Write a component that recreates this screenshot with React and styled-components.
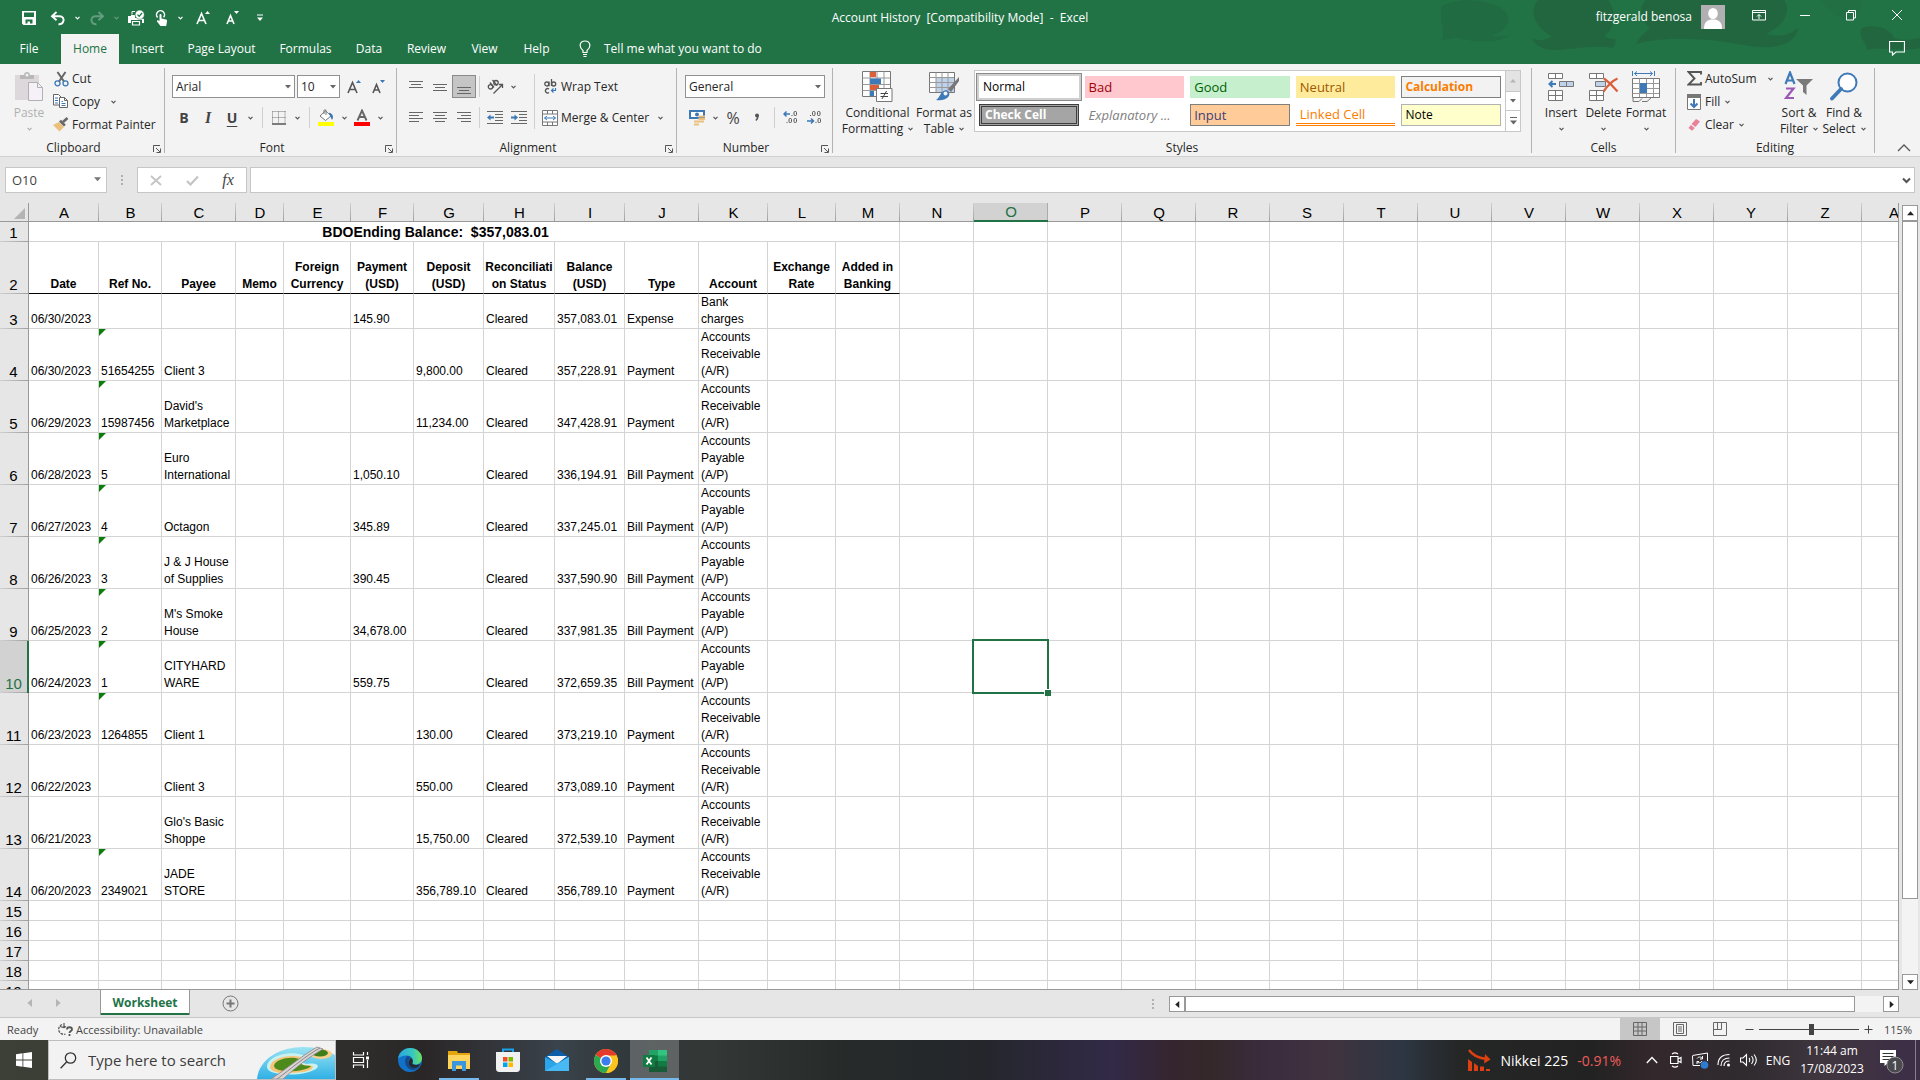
import React from "react";
import styled, { createGlobalStyle, css } from "styled-components";

const ui = `"Open Sans", "Noto Sans", sans-serif`;
const sheetFont = `"Liberation Sans", Arial, sans-serif`;
const green = "#217346";

const GlobalStyle = createGlobalStyle`
  * { box-sizing: border-box; }
  body { margin: 0; overflow: hidden; font-family: ${ui}; font-size: 12px; color: #262626; }
  button, input, select { font: inherit; color: inherit; margin: 0; padding: 0; border: 0; background: none; border-radius: 0; outline: none; }
  svg { display: block; flex: none; }
`;

const Window = styled.div`
  height: 100vh;
  display: flex;
  flex-direction: column;
  background: #e6e6e6;
`;

/* ---------- title bar and tabs ---------- */
const Header = styled.header`
  position: relative;
  background: ${green};
  color: #fff;
  flex: none;
`;
const HeaderArt = styled.svg`
  position: absolute;
  right: 0;
  top: 0;
`;
const TitleRow = styled.div`
  position: relative;
  height: 34px;
  display: grid;
  grid-template-columns: 1fr auto 1fr;
`;
const QuickAccess = styled.div`
  display: flex;
  align-items: center;
  padding-left: 17px;
`;
const QuickButton = styled.button`
  width: ${(p) => p.$w || 24}px;
  height: 30px;
  display: flex;
  align-items: center;
  justify-content: center;
  opacity: ${(p) => (p.$dim ? 0.3 : 1)};
`;
const Title = styled.h1`
  margin: 0;
  font-size: 12px;
  font-weight: 400;
  line-height: 36px;
  white-space: pre;
`;
const WindowTools = styled.div`
  display: flex;
  justify-content: flex-end;
`;
const User = styled.button`
  display: flex;
  align-items: center;
  gap: 9px;
  height: 34px;
  line-height: 36px;
  margin-right: 11px;
`;
const WindowButton = styled.button`
  width: ${(p) => p.$w || 46}px;
  height: 30px;
  display: flex;
  align-items: center;
  justify-content: center;
`;
const TabRow = styled.nav`
  position: relative;
  height: 30px;
  display: flex;
`;
const Tab = styled.button`
  width: ${(p) => p.$w}px;
  height: 30px;
  padding-bottom: 2px;
  text-align: center;
  ${(p) => p.$active && css`
    background: #f3f3f3;
    color: ${green};
    margin-left: 3px;
  `}
`;
const TellMe = styled.button`
  display: flex;
  align-items: center;
  gap: 13px;
  padding: 0 0 2px 16px;
`;
const CommentButton = styled.button`
  margin-left: auto;
  padding: 0 15px 2px 0;
`;

/* ---------- ribbon ---------- */
const Ribbon = styled.div`
  height: 93px;
  flex: none;
  display: flex;
  background: #f3f3f3;
  border-bottom: 1px solid #d2d0ce;
`;
const GroupBox = styled.section`
  display: flex;
  ${(p) => (p.$w ? css`width: ${p.$w}px; flex: none;` : css`flex: 1; min-width: 0;`)}
  &::after {
    content: "";
    width: 1px;
    margin: 4px 0 3px;
    background: #b3b3b3;
  }
`;
const GroupInner = styled.div`
  flex: 1;
  min-width: 0;
  display: flex;
  flex-direction: column;
`;
const GroupBody = styled.div`
  height: 76px;
  display: flex;
  padding: 3px 0 0 ${(p) => p.$pad || 0}px;
  justify-content: ${(p) => p.$justify || "flex-start"};
`;
const GroupFoot = styled.div`
  height: 16px;
  display: flex;
  align-items: center;
  line-height: 16px;
  text-align: center;
`;
const Launcher = styled.button`
  width: 10px;
  height: 10px;
  margin: 2px 2px 0 5px;
`;
const FootLabel = styled.span`
  flex: 1;
`;
const BigButton = styled.button`
  width: ${(p) => p.$w}px;
  height: 71px;
  display: flex;
  flex-direction: column;
  align-items: center;
  line-height: 16px;
  white-space: nowrap;
  color: ${(p) => (p.$disabled ? "#b1b1b1" : "#262626")};
`;
const BigIcon = styled.span`
  height: 38px;
  display: flex;
  align-items: center;
`;
const Line = styled.span`
  height: 16px;
  display: flex;
  align-items: center;
  gap: 5px;
`;
const CommandList = styled.div`
  display: flex;
  flex-direction: column;
  width: ${(p) => p.$w}px;
  padding-left: ${(p) => p.$pad || 0}px;
`;
const Command = styled.button`
  height: 23px;
  display: flex;
  align-items: center;
  gap: 3px;
  white-space: nowrap;
`;
const IconSlot = styled.span`
  width: 16px;
  display: flex;
  justify-content: center;
`;
const ChevSlot = styled.span`
  margin-left: ${(p) => p.$gap || 2}px;
`;
const Rows = styled.div`
  display: flex;
  flex-direction: column;
  gap: 8px;
  padding-top: 8px;
`;
const ToolRow = styled.div`
  height: 23px;
  display: flex;
  align-items: center;
`;
const Tool = styled.button`
  width: 24px;
  height: 23px;
  display: flex;
  align-items: center;
  justify-content: center;
  color: #444;
  font-size: ${(p) => p.$size || 14}px;
  font-weight: ${(p) => (p.$bold ? 700 : 400)};
  font-style: ${(p) => (p.$italic ? "italic" : "normal")};
  font-family: ${(p) => (p.$italic ? `"Liberation Serif", serif` : "inherit")};
  text-decoration: ${(p) => (p.$underline ? "underline" : "none")};
  text-underline-offset: 3px;
  ${(p) => p.$pressed && css`
    background: #c5c5c5;
    box-shadow: inset 0 0 0 1px #8a8a8a;
  `}
`;
const SmallArrow = styled.button`
  width: 12px;
  height: 23px;
  display: flex;
  align-items: center;
  justify-content: center;
`;
const Divider = styled.span`
  width: 1px;
  height: ${(p) => p.$h || 21}px;
  background: #d0d0d0;
  margin: ${(p) => p.$m || "0 4px 0 6px"};
`;
const SelectWrap = styled.span`
  position: relative;
  display: block;
  width: ${(p) => p.$w}px;
  height: 23px;
  margin-right: 2px;
  svg { position: absolute; right: 4px; top: 9px; pointer-events: none; }
`;
const Combo = styled.select`
  appearance: none;
  width: 100%;
  height: 23px;
  padding-left: 3px;
  background: #fff;
  border: 1px solid #919191;
`;

/* style gallery */
const Gallery = styled.div`
  flex: 1;
  height: 62px;
  margin: 3px 10px 0 0;
  display: flex;
  background: #fff;
  border: 1px solid #c8c8c8;
`;
const Swatches = styled.div`
  flex: 1;
  display: grid;
  grid-template-columns: repeat(5, minmax(0, 1fr));
  grid-auto-rows: 22px;
  gap: 6px;
  padding: 5px 4px;
`;
const Swatch = styled.button`
  padding-left: ${(p) => (p.$border ? 3 : 4)}px;
  text-align: left;
  white-space: nowrap;
  font-size: ${(p) => p.$size || 13}px;
  line-height: 16px;
  color: ${(p) => p.$color || "#000"};
  background: ${(p) => p.$bg || "#fff"};
  border: ${(p) => p.$border || "0"};
  border-bottom: ${(p) => p.$under || p.$border || "0"};
  font-weight: ${(p) => (p.$bold ? 700 : 400)};
  font-style: ${(p) => (p.$italic ? "italic" : "normal")};
  ${(p) => p.$selected && css`box-shadow: 0 0 0 2px #cfcfcf, 0 0 0 3px #8a8a8a;`}
`;
const GalleryScroll = styled.div`
  width: 15px;
  display: grid;
  grid-template-rows: 20px 19px 21px;
  border-left: 1px solid #c8c8c8;
`;
const GalleryButton = styled.button`
  display: flex;
  align-items: center;
  justify-content: center;
  background: ${(p) => (p.$off ? "#e3e3e3" : "#fff")};
  & + & { border-top: 1px solid #c8c8c8; }
`;
const Collapse = styled.button`
  width: 45px;
  display: flex;
  align-items: flex-end;
  justify-content: flex-end;
  padding: 0 9px 4px 0;
`;

/* ---------- formula bar ---------- */
const FormulaBar = styled.div`
  height: 46px;
  flex: none;
  display: flex;
  align-items: center;
  padding: 0 5px 0 5px;
`;
const NameBox = styled.span`
  position: relative;
  width: 102px;
  svg { position: absolute; right: 6px; top: 9px; }
`;
const NameInput = styled.input`
  width: 100%;
  height: 26px;
  padding-left: 6px;
  background: #fff;
  border: 1px solid #c6c6c6;
  color: #444;
  font-size: 13px;
  display: block;
`;
const Grip = styled.span`
  width: 2px;
  height: 10px;
  margin: 0 ${(p) => p.$m ?? 14}px;
  background: repeating-linear-gradient(#b0b0b0 0 2px, transparent 2px 4px);
`;
const FormulaTools = styled.div`
  width: 110px;
  height: 26px;
  display: flex;
  justify-content: space-around;
  background: #fff;
  border: 1px solid #c6c6c6;
  margin-right: 3px;
`;
const FormulaButton = styled.button`
  width: 30px;
  display: flex;
  align-items: center;
  justify-content: center;
  font: italic 400 16px "Liberation Serif", serif;
  color: #444;
`;
const FormulaField = styled.span`
  flex: 1;
  height: 26px;
  display: flex;
  align-items: center;
  padding-right: 3px;
  background: #fff;
  border: 1px solid #c6c6c6;
`;
const FormulaInput = styled.input`
  flex: 1;
  height: 24px;
`;

/* ---------- sheet ---------- */
const SheetArea = styled.main`
  flex: 1;
  min-height: 0;
  display: flex;
`;
const GridView = styled.div`
  flex: 1;
  min-width: 0;
  overflow: hidden;
  background: #fff;
  border-right: 1px solid #999;
  border-bottom: 1px solid #999;
`;
const Grid = styled.table`
  table-layout: fixed;
  width: 0;
  border-collapse: separate;
  border-spacing: 0;
  font-family: ${sheetFont};
  font-size: 12px;
  line-height: 17px;
  color: #000;
`;
const ColHead = styled.th`
  height: 19px;
  padding: 1px 0 0;
  font-size: 15px;
  font-weight: 400;
  line-height: 17px;
  background: linear-gradient(#d0d0d0, #a0a0a0) right / 1px 100% no-repeat, #e6e6e6;
  border-bottom: 1px solid #999;
  ${(p) => p.$active && css`
    color: ${green};
    background: linear-gradient(#ababab, #ababab) right / 1px 100% no-repeat, #d2d2d2;
    border-bottom: 2px solid ${green};
    padding: 0;
  `}
`;
const Corner = styled(ColHead)`
  background: #e6e6e6;
  border-right: 1px solid #999;
  padding: 3px 3px 0 14px;
`;
const RowHead = styled.th`
  padding: 0 1px 0 0;
  overflow: hidden;
  vertical-align: bottom;
  font-size: 15px;
  font-weight: 400;
  background: linear-gradient(90deg, #d0d0d0, #a0a0a0) bottom / 100% 1px no-repeat, #e6e6e6;
  border-right: 1px solid #999;
  line-height: 19px;
  ${(p) => p.$active && css`
    color: ${green};
    background-color: #d2d2d2;
    border-right: 2px solid ${green};
    padding: 0;
  `}
`;
const Row = styled.tr`
  height: ${(p) => p.$h}px;
`;
const Cell = styled.td`
  position: relative;
  padding: 0 0 0 2px;
  vertical-align: bottom;
  border-right: 1px solid #d4d4d4;
  border-bottom: 1px solid #d4d4d4;
  white-space: pre-line;
`;
const HeadCell = styled(Cell)`
  padding: 0;
  text-align: center;
  font-weight: 700;
  border-bottom-color: #000;
`;
const TitleCell = styled(Cell)`
  padding: 0 57px 0 0;
  text-align: center;
  font-size: 14px;
  font-weight: 700;
  white-space: pre;
`;
const ErrorMark = styled.i`
  position: absolute;
  left: 0;
  top: 0;
  border-top: 7px solid #0a7d0a;
  border-right: 7px solid transparent;
`;
const Selection = styled.div`
  position: absolute;
  inset: -2px;
  border: 2px solid ${green};
  z-index: 1;
  &::after {
    content: "";
    position: absolute;
    right: -4px;
    bottom: -4px;
    width: 6px;
    height: 6px;
    background: ${green};
    border: solid #fff;
    border-width: 1px 0 0 1px;
  }
`;
const VScroll = styled.div`
  width: 21px;
  display: flex;
  flex-direction: column;
  padding: 2px 3px 0 3px;
`;
const ScrollButton = styled.button`
  width: 16px;
  height: 16px;
  flex: none;
  display: flex;
  align-items: center;
  justify-content: center;
  background: #fff;
  border: 1px solid #999;
`;
const VTrack = styled.div`
  flex: 1;
  width: 16px;
  background: #f3f3f3;
  display: flex;
  flex-direction: column;
`;
const VThumb = styled.div`
  height: 90%;
  background: #fff;
  border: 1px solid #999;
`;

const SheetTabs = styled.div`
  height: 28px;
  flex: none;
  display: flex;
  align-items: flex-start;
  border-bottom: 1px solid #c6c6c6;
`;
const TabNav = styled.div`
  width: 100px;
  height: 26px;
  display: flex;
  align-items: center;
  gap: 20px;
  padding-left: 26px;
`;
const SheetTab = styled.button`
  width: 90px;
  height: 25px;
  background: #fff;
  color: ${green};
  font-weight: 700;
  border: solid #999;
  border-width: 0 1px;
  box-shadow: inset 0 -2px ${green};
`;
const AddSheet = styled.button`
  margin: 5px 0 0 32px;
`;
const HScroll = styled.div`
  margin-left: auto;
  height: 28px;
  width: 40%;
  display: flex;
  align-items: center;
  padding-right: 21px;
`;
const HGap = styled.span`
  width: 15px;
`;
const HTrack = styled.div`
  flex: 1;
  height: 16px;
  background: #f3f3f3;
`;
const HThumb = styled.div`
  width: 96%;
  height: 16px;
  background: #fff;
  border: 1px solid #999;
`;

/* ---------- status bar ---------- */
const Status = styled.footer`
  height: 22px;
  flex: none;
  display: flex;
  align-items: center;
  background: #f3f3f3;
  color: #444;
  font-size: 11px;
`;
const StatusText = styled.span`
  padding-left: 7px;
  width: 57px;
`;
const Access = styled.button`
  display: flex;
  align-items: center;
  gap: 3px;
`;
const Views = styled.div`
  margin-left: auto;
  display: flex;
`;
const ViewButton = styled.button`
  width: 40px;
  height: 22px;
  display: flex;
  align-items: center;
  justify-content: center;
  background: ${(p) => (p.$active ? "#c6c6c6" : "transparent")};
`;
const ZoomGroup = styled.div`
  display: flex;
  align-items: center;
  gap: 5px;
  padding: 0 8px 0 5px;
`;
const ZoomRange = styled.input`
  appearance: none;
  width: 100px;
  height: 12px;
  background: linear-gradient(#444, #444) center / 100% 1px no-repeat;
  &::-webkit-slider-thumb {
    appearance: none;
    width: 5px;
    height: 11px;
    background: #444;
  }
`;
const ZoomValue = styled.button`
  width: 34px;
  text-align: right;
`;

/* ---------- taskbar ---------- */
const Taskbar = styled.div`
  height: 40px;
  flex: none;
  display: flex;
  color: #fff;
  background: linear-gradient(90deg, #3d4037 0%, #33352f 12%, #2f2e2d 18%, #2a2627 22%, #3a424b 29%, #30383a 33%,
    #333735 37%, #262b2a 44%, #24262b 51%, #322a47 58%, #35252f 61%, #34282a 63%, #3b2c3e 66%, #40333f 69%, #2d3642 73%,
    #252626 76%, #232222 83%, #33282c 86%, #2f2b2f 91%, #40363f 95%, #3d2f45 99%);
`;
const Start = styled.button`
  width: 48px;
  display: flex;
  align-items: center;
  justify-content: center;
`;
const Search = styled.label`
  width: 288px;
  display: flex;
  align-items: center;
  padding-left: 11px;
  background: #f2f2f2;
  border: 1px solid #bdbdbd;
`;
const SearchInput = styled.input`
  width: 170px;
  flex: 1;
  padding-left: 11px;
  font-size: 15px;
  color: #333;
  &::placeholder { color: #3d3d3d; opacity: 1; }
`;
const SearchArtWrap = styled.span`
  align-self: flex-end;
`;
const Apps = styled.div`
  display: flex;
`;
const AppButton = styled.button`
  width: 49px;
  display: flex;
  align-items: center;
  justify-content: center;
  border-bottom: 2px solid transparent;
  border-top: 2px solid transparent;
  ${(p) => p.$running && css`
    background: linear-gradient(#76b9ed, #76b9ed) bottom / ${p.$active ? "100%" : "40px"} 2px no-repeat ${p.$active ? ", rgba(255,255,255,.22)" : ""};
    border-bottom: 0;
  `}
`;
const Ticker = styled.button`
  margin-left: auto;
  display: flex;
  align-items: center;
  gap: 9px;
  font-size: 14px;
  white-space: nowrap;
  margin-right: 19px;
`;
const Loss = styled.span`
  color: #ee5d5d;
`;
const Tray = styled.div`
  display: flex;
`;
const TrayButton = styled.button`
  width: 24px;
  display: flex;
  align-items: center;
  justify-content: center;
`;
const Language = styled.button`
  width: 36px;
`;
const Clock = styled.button`
  width: 72px;
  line-height: 18px;
  text-align: center;
`;
const Notify = styled.button`
  width: 47px;
  display: flex;
  align-items: center;
  justify-content: center;
  padding-top: 3px;
`;
const DesktopEdge = styled.button`
  width: 5px;
  border-left: 1px solid #8a8090;
`;

/* ---------- icons ---------- */
const Chevron = ({ color = "#555", big }) => (
  <svg width={big ? 9 : 5} height={big ? 7 : 4} viewBox="0 0 5 4"><path d="M.5 .8 2.5 2.8 4.5 .8" fill="none" stroke={color} strokeWidth="1.2" /></svg>
);
const Triangle = ({ dir = "down", color = "#444", s = 6 }) => {
  const d = { down: "M0 1H6L3 4.5Z", up: "M0 4.5H6L3 1Z", left: "M4.5 0V6L1 3Z", right: "M1.5 0V6L5 3Z" }[dir];
  return <svg width={s} height={s} viewBox="0 0 6 6"><path d={d} fill={color} /></svg>;
};
const LauncherIcon = () => (
  <svg width="10" height="10" viewBox="0 0 10 10"><path d="M1.5 8V1.5H8M4 4 8 8M8.5 4.5V8.5H4.5" fill="none" stroke="#555" /></svg>
);
const FontSizeIcon = ({ up, color = "#555", mark = "#3b78b5", small }) => (
  <svg width="15" height="16" viewBox="0 0 15 16">
    <path d={small ? "M2 14 5.5 5.5 9 14M3.2 11H7.8" : "M1 14 5.5 3.5 10 14M2.6 10.5H8.4"} fill="none" stroke={color} strokeWidth="1.6" />
    <path d={up ? "M9 4H14L11.5 1Z" : "M9 1H14L11.5 4Z"} fill={mark} />
  </svg>
);
const UndoIcon = ({ flip }) => (
  <svg width="16" height="15" viewBox="0 0 16 15"><g transform={flip ? "matrix(-1 0 0 1 16 0)" : undefined}>
    <path d="M6.5 1 2 5.2 6.5 9.2M2.5 5.2H9.5C13 5.2 14.3 8 13.2 10.6 12.5 12.3 10.7 13.4 8.5 13.2" fill="none" stroke="#fff" strokeWidth="1.9" /></g></svg>
);
const SaveIcon = () => (
  <svg width="14" height="14" viewBox="0 0 14 14"><path fillRule="evenodd" d="M0 0H14V14H1.5L0 12.5ZM2 1.5V6H12V1.5ZM3.5 8.5V12.5H5.5V10.5H8V12.5H10.5V8.5Z" fill="#fff" /></svg>
);
const PrintIcon = () => (
  <svg width="17" height="16" viewBox="0 0 17 16">
    <path d="M0 6H3V5H7V8H13L16 9V13H14V10H3V13H0Z" fill="#fff" /><path d="M4.5 11.5H11.5V15H4.5Z" fill={green} stroke="#fff" strokeWidth="1.2" />
    <path d="M4 4.500V1.500H7" fill="none" stroke="#fff" /><circle cx="11.700" cy="4.700" r="4.600" fill="#fff" stroke={green} strokeWidth=".6" /><path d="M9.500 4.600 11.200 6.300 14 3" fill="none" stroke={green} strokeWidth="1.300" />
  </svg>
);
const TouchIcon = () => (
  <svg width="13" height="17" viewBox="0 0 13 17">
    <path d="M4.500 11V5C4.500 3.600 6.500 3.600 6.500 5V8.500L11 9.500C12 9.800 12.200 10.500 12 11.500L11.200 16H5.500L2 11.500C1.500 10.500 3 10 3.500 10.500Z" fill="#fff" />
    <path d="M2.600 7.500A4 4 0 1 1 8.600 7.300" fill="none" stroke="#fff" strokeWidth="1.500" />
  </svg>
);
const LinesIcon = ({ rows }) => (
  <svg width="14" height="14" viewBox="0 0 14 14">
    {rows.map(([x, y, l]) => <path key={y} d={`M${x} ${y}.5H${x + l}`} stroke="#666" />)}
  </svg>
);
const IndentIcon = ({ out }) => (
  <svg width="16" height="14" viewBox="0 0 16 14">
    <path d="M0 .5H16M8 3.500H16M8 6.500H16M8 9.500H16M0 12.500H16" stroke="#666" />
    {out ? <path d="M0 6.500 3.500 3.500V5.500H7V7.500H3.500V9.500Z" fill="#3b78b5" /> : <path d="M7 6.500 3.500 3.500V5.500H0V7.500H3.500V9.500Z" fill="#3b78b5" />}
  </svg>
);
const OrientIcon = () => (
  <svg width="17" height="16" viewBox="0 0 17 16">
    <g fill="none" stroke="#555" strokeWidth="1.300"><circle cx="3.500" cy="7.800" r="2.200" /><path d="M3 3.500 7 8.500" /><path d="M5.500 1 10 6.500" /><circle cx="9" cy="3.700" r="2.200" /><path d="M6.500 14.500 15.500 5.500M12 5.500H15.500V9" /></g>
  </svg>
);
const WrapIcon = () => (
  <svg width="13" height="15" viewBox="0 0 13 15">
    <g fill="none" stroke="#555" strokeWidth="1.300"><circle cx="2.800" cy="5" r="2" /><path d="M5 2.500V7.200M7.500 0V7" /><circle cx="9.700" cy="5" r="2" /><path d="M5 10A2.200 2.200 0 1 0 5 13.500" /></g>
    <path d="M11.500 9V11.500H8M9.500 9.500 7.500 11.500 9.500 13.500" fill="none" stroke="#3b78b5" strokeWidth="1.200" />
  </svg>
);
const MergeIcon = () => (
  <svg width="16" height="16" viewBox="0 0 16 16"><path d="M.5 .5H15.500V15.500H.5ZM.5 4H15.500M.5 12H15.500M5.500 .5V4M10.500 .5V4M5.500 12V15.500M10.500 12V15.500" fill="#fff" stroke="#777" /><path d="M2.500 8H13.500M5 6 2.500 8 5 10M11 6 13.500 8 11 10" fill="none" stroke="#3b78b5" /></svg>
);
const CutIcon = () => (
  <svg width="15" height="16" viewBox="0 0 15 16"><path d="M3.500 1 10 10.500M11.500 1 5 10.500" stroke="#666" strokeWidth="2" /><g fill="none" stroke="#3b78b5" strokeWidth="1.300"><circle cx="3.500" cy="12.300" r="2.500" /><circle cx="11.500" cy="12.300" r="2.500" /></g></svg>
);
const CopyIcon = () => (
  <svg width="16" height="15" viewBox="0 0 16 15">
    <path d="M.5 .5H5.500L8.500 3.500V11H.5Z" fill="#fff" stroke="#666" /><path d="M2 4H5M2 6.500H5M2 9H5" stroke="#3b78b5" />
    <path d="M6.500 3.500H11.500L14.500 6.500V13.500H6.500Z" fill="#fff" stroke="#666" /><path d="M11.500 3.500V6.500H14.500" fill="none" stroke="#666" /><path d="M8.500 7.500H10M8.500 9.500H12.500M8.500 11.500H12.500" stroke="#3b78b5" />
  </svg>
);
const PainterIcon = () => (
  <svg width="16" height="15" viewBox="0 0 16 15"><path d="M0 8 6 5 11 10 6.500 14.500Z" fill="#ebc07c" /><path d="M6 4.500 8 2.800 12.800 7.800 11 9.500Z" fill="#666" /><path d="M10 5 14.500 1" stroke="#666" strokeWidth="2.600" /></svg>
);
const PasteIcon = () => (
  <svg width="30" height="31" viewBox="0 0 30 31"><path d="M1 4H25V29H1Z" fill="#dcd8dc" /><path d="M6 8V4H10C10 0 16 0 16 4H20V8Z" fill="#b8b8b8" /><circle cx="13" cy="4" r="1.500" fill="#f3f3f3" /><path d="M14.500 11.500H23.500L28.500 16.500V29.500H14.500Z" fill="#f6f1f8" stroke="#b1b1b1" /><path d="M23.500 11.500V16.500H28.500" fill="none" stroke="#b1b1b1" /></svg>
);
const BordersIcon = () => (
  <svg width="14" height="14" viewBox="0 0 14 14"><path d="M.5 .5H13.500M.5 6.500H13.500M.5 .5V12M6.500 .5V12M13 .5V12" stroke="#777" strokeDasharray="1 1" fill="none" /><path d="M0 13H14" stroke="#555" strokeWidth="1.500" /></svg>
);
const FillColorIcon = () => (
  <svg width="16" height="17" viewBox="0 0 16 17"><path d="M2 7 7.500 1.800 13 7 7.500 11.500Z" fill="#fff" stroke="#777" /><path d="M6 5V1.500C6 .5 8 .5 8 1.500V6" fill="none" stroke="#777" /><path d="M11.500 3.500C15 5 16 8 14 11 13 9 12.500 7 11 5Z" fill="#3b78b5" /><path d="M0 13H16V17H0Z" fill="#ff0" /></svg>
);
const FontColorIcon = () => (
  <svg width="16" height="17" viewBox="0 0 16 17"><path d="M3.500 11.500 8 1.500 12.500 11.500M5 8H11" fill="none" stroke="#666" strokeWidth="1.900" /><path d="M0 13H16V17H0Z" fill="red" /></svg>
);
const CurrencyIcon = () => (
  <svg width="17" height="17" viewBox="0 0 17 17"><path d="M0 1H16V10H0Z" fill="#3b78b5" /><path d="M2 3H14V8H2Z" fill="#fff" /><circle cx="8" cy="5.500" r="2" fill="#3b78b5" /><path d="M9.500 7.500H16M9.500 10H16M5 12.500H11M5 15.500H10M10 12.500H15" stroke="#ebc07c" strokeWidth="2" /></svg>
);
const CommaIcon = () => (
  <svg width="6" height="9" viewBox="0 0 6 9"><path d="M3 3C3 6 2 7 .8 8" fill="none" stroke="#555" strokeWidth="1.500" transform="translate(1 -.5)" /><circle cx="3" cy="2.500" r="2" fill="#555" /></svg>
);
const DecimalIcon = ({ less }) => (
  <svg width="15" height="15" viewBox="0 0 15 15" fill="none">
    <g stroke="#555">{less
      ? <><rect x="5.500" y="1.500" width="2.500" height="4" rx="1" /><rect x="10.500" y="1.500" width="2.500" height="4" rx="1" /><rect x="11" y="8.500" width="2.500" height="4" rx="1" /><path d="M3 5.500H4M8.500 12.500H9.500" /></>
      : <><rect x="11" y="1.500" width="2.500" height="4" rx="1" /><rect x="6" y="8.500" width="2.500" height="4" rx="1" /><rect x="11" y="8.500" width="2.500" height="4" rx="1" /><path d="M8.500 5.500H9.500M3.500 12.500H4.500" /></>}</g>
    {less ? <path d="M0 11H6M4 8.500 6.500 11 4 13.500" stroke="#3b78b5" strokeWidth="1.500" /> : <path d="M7 4H1M3.500 1.500 1 4 3.500 6.500" stroke="#3b78b5" strokeWidth="1.500" />}
  </svg>
);
const CondIcon = () => (
  <svg width="31" height="31" viewBox="0 0 31 31">
    <path d="M.5 .5H28.500V25.500H.5Z" fill="#fff" stroke="#777" /><path d="M8 .5V25M15 .5V25M22 .5V25M.5 7H28M.5 13.500H28M.5 19.500H28" stroke="#999" />
    <path d="M8 1H14V6H8ZM8 14H17V19H8Z" fill="#dc5f3c" /><path d="M8 7.500H19V13H8ZM8 20H12V25H8Z" fill="#3f7ab8" />
    <path d="M14.500 17.500H30V30.500H14.500Z" fill="#fff" stroke="#777" /><path d="M18.500 22.500H26M18.500 25.500H26M24.500 20 20 28" stroke="#444" />
  </svg>
);
const TableIcon = () => (
  <svg width="31" height="30" viewBox="0 0 31 30"><path d="M.5 1.500H25.500V21.500H.5Z" fill="#fff" stroke="#777" /><path d="M7 7H25V21H7Z" fill="#bfd2ea" /><path d="M7 1.500V21M13 1.500V21M19 1.500V21M.5 6.500H25M.5 11.500H25M.5 16.500H25" stroke="#999" /><path d="M30 6 19 18 22 21 30 10Z" fill="#777" /><path d="M7 29C11 27 11 20 17 19 20 20 21 22 20 25 17 29 12 30 7 29Z" fill="#3f7ab8" /><circle cx="16.500" cy="22.500" r="2" fill="#f3f3f3" /></svg>
);
const InsertIcon = () => (
  <svg width="27" height="29" viewBox="0 0 27 29"><path d="M.5 1.500H14.500V6.500H.5ZM7.500 1.500V6.500M.5 18.500H14.500V28.500H.5ZM7.500 18.500V28.500M.5 23.500H14.500" fill="#fff" stroke="#777" /><path d="M11.500 9.500H25.500V14.500H11.500ZM18.500 9.500V14.500" fill="#bfd2ea" stroke="#777" /><path d="M1.500 12H8M4.500 9 1.500 12 4.500 15" fill="none" stroke="#3f7ab8" strokeWidth="2" /></svg>
);
const DeleteIcon = () => (
  <svg width="30" height="29" viewBox="0 0 30 29"><path d="M.5 1.500H14.500V6.500H.5ZM7.500 1.500V6.500M.5 18.500H14.500V28.500H.5ZM7.500 18.500V28.500M.5 23.500H14.500" fill="#fff" stroke="#777" /><path d="M6.500 9.500H16.500V14.500H6.500Z" fill="#bfd2ea" stroke="#777" /><path d="M15 6.500C20 10 24 14 28.500 19.500M28.500 6.500C23 9 19 13 14.500 19.500" stroke="#dc5f3c" strokeWidth="2.200" fill="none" /></svg>
);
const FormatIcon = () => (
  <svg width="28" height="31" viewBox="0 0 28 31"><path d="M.5 0V5M22.500 0V5M2.500 2.500H20.500M5 .5 2.500 2.500 5 5M18 .5 20.500 2.500 18 5" fill="none" stroke="#3f7ab8" /><path d="M.5 7.500H27.500V26.500H.5Z" fill="#fff" stroke="#777" /><path d="M7.500 7.500V26M14.500 7.500V26M21.500 7.500V26M.5 12.500H27M.5 17.500H27M.5 22.500H27" stroke="#999" /><path d="M8 12H15V22H8Z" fill="#3f7ab8" /><path d="M1 27V30.500H7L10 27.500M10 30.500H15L19 27" fill="none" stroke="#777" /></svg>
);
const SortIcon = () => (
  <svg width="30" height="30" viewBox="0 0 30 30" fill="none"><path d="M1.500 13 6 1.500 10.500 13M3 9.500H9" stroke="#3f7ab8" strokeWidth="2.200" /><path d="M2 17.500H9.500L2 27H10" stroke="#9b59b6" strokeWidth="2.200" /><path d="M12 8H29L22.500 14.500V24L19 21V14.500Z" fill="#7a7a7a" /></svg>
);
const FindIcon = () => (
  <svg width="28" height="29" viewBox="0 0 28 29"><circle cx="17.500" cy="10.500" r="9" fill="#fff" stroke="#3f7ab8" strokeWidth="2" /><path d="M11 17 2 26.500" stroke="#3f7ab8" strokeWidth="3.800" strokeLinecap="round" /></svg>
);
const SumIcon = () => (
  <svg width="15" height="15" viewBox="0 0 15 15"><path d="M14 3.500V1H1.500L7.500 7.500 1.500 13.500H14V11" fill="none" stroke="#555" strokeWidth="1.900" /></svg>
);
const FillIcon = () => (
  <svg width="14" height="16" viewBox="0 0 14 16"><path d="M.5 .5H13.500V15.500H.5Z" fill="#fff" stroke="#777" /><path d="M0 0H14V4H0Z" fill="#777" /><path d="M7 5V13M3.500 9.500 7 13 10.500 9.500" fill="none" stroke="#3f7ab8" strokeWidth="2" /></svg>
);
const ClearIcon = () => (
  <svg width="14" height="14" viewBox="0 0 14 14"><path d="M4.500 6 9 1 13 3.500 8.500 9Z" fill="#e8819a" /><path d="M3.800 7 7.800 10 5 12.800 1.500 10Z" fill="#e8819a" /></svg>
);
const BulbIcon = () => (
  <svg width="12" height="17" viewBox="0 0 12 17" fill="none" stroke="#fff"><path d="M4 12.500V10.500C-.5 7 .5 1 6 1S12.500 7 8 10.500V12.500ZM4 14.500H8M4.500 16.500H7.500" strokeWidth="1.200" /></svg>
);
const WinIcon = ({ children }) => <svg width="14" height="14" viewBox="0 0 14 14" fill="none" stroke="#fff">{children}</svg>;
const SearchArt = () => (
  <svg width="78" height="33" viewBox="0 0 78 33">
    <defs><linearGradient id="sea" x1="0" y1="0" x2="0" y2="1"><stop offset="0" stopColor="#9be4f3" /><stop offset="1" stopColor="#2fb0e6" /></linearGradient></defs>
    <path d="M0 33C2 12 24 1 46 1 60 1 70 4 78 9V33Z" fill="url(#sea)" />
    <path d="M10 21C10 10 32 4 46 9 48 14 40 16 50 18 62 16 66 22 52 26 40 30 10 30 10 21Z" fill="#c8f1ef" />
    <path d="M13 21C14 12 32 8 44 11 46 14 40 16 46 19 60 18 58 24 46 26 30 28 14 28 13 21Z" fill="#f6c478" />
    <path d="M17 20C18 13 34 10 42 13 42 17 44 20 54 20 50 26 18 28 17 20Z" fill="#4d8a1c" />
    <ellipse cx="64" cy="8" rx="11" ry="5" fill="#f6d08c" /><ellipse cx="63" cy="7" rx="8" ry="3.500" fill="#3f7d1a" />
    <path d="M14 33C28 24 46 9 60 1L66 3C52 11 38 22 26 33Z" fill="#d9d4d4" stroke="#8d8585" strokeWidth=".8" /><path d="M20 33C34 23 48 10 63 2" stroke="#8d8585" fill="none" />
  </svg>
);

/* ---------- data ---------- */
const tabs = [["File", 58], ["Home", 58], ["Insert", 57], ["Page Layout", 91], ["Formulas", 77], ["Data", 50], ["Review", 65], ["View", 51], ["Help", 53]];

const swatches = [
  { name: "Normal", $selected: true, $size: 12 },
  { name: "Bad", $bg: "#ffc7ce", $color: "#9c0006" },
  { name: "Good", $bg: "#c6efce", $color: "#006100" },
  { name: "Neutral", $bg: "#ffeb9c", $color: "#9c5700" },
  { name: "Calculation", $bg: "#f2f2f2", $color: "#fa7d00", $border: "1px solid #7f7f7f", $bold: true, $size: 12 },
  { name: "Check Cell", $bg: "#a5a5a5", $color: "#fff", $border: "3px double #3f3f3f", $bold: true, $size: 12 },
  { name: "Explanatory ...", $color: "#7f7f7f", $italic: true },
  { name: "Input", $bg: "#ffcc99", $color: "#3f3f76", $border: "1px solid #7f7f7f" },
  { name: "Linked Cell", $color: "#fa7d00", $under: "3px double #ff8001" },
  { name: "Note", $bg: "#ffffcc", $border: "1px solid #b2b2b2", $size: 12 },
];

const columns = [70, 63, 74, 48, 67, 63, 70, 71, 70, 74, 69, 68, 64, 74, 74, 74, 74, 74, 74, 74, 74, 74, 74, 74, 74, 74, 74];
const letter = (i) => (i < 26 ? String.fromCharCode(65 + i) : "AA");
const headings = ["Date", "Ref No.", "Payee", "Memo", "Foreign\nCurrency", "Payment\n(USD)", "Deposit\n(USD)", "Reconciliati\non Status", "Balance\n(USD)", "Type", "Account", "Exchange\nRate", "Added in\nBanking"];
const AR = "Accounts\nReceivable\n(A/R)";
const AP = "Accounts\nPayable\n(A/P)";
const entries = [
  ["06/30/2023", "", "", "145.90", "", "357,083.01", "Expense", "Bank\ncharges"],
  ["06/30/2023", "51654255", "Client 3", "", "9,800.00", "357,228.91", "Payment", AR],
  ["06/29/2023", "15987456", "David's\nMarketplace", "", "11,234.00", "347,428.91", "Payment", AR],
  ["06/28/2023", "5", "Euro\nInternational", "1,050.10", "", "336,194.91", "Bill Payment", AP],
  ["06/27/2023", "4", "Octagon", "345.89", "", "337,245.01", "Bill Payment", AP],
  ["06/26/2023", "3", "J & J House\nof Supplies", "390.45", "", "337,590.90", "Bill Payment", AP],
  ["06/25/2023", "2", "M's Smoke\nHouse", "34,678.00", "", "337,981.35", "Bill Payment", AP],
  ["06/24/2023", "1", "CITYHARD\nWARE", "559.75", "", "372,659.35", "Bill Payment", AP],
  ["06/23/2023", "1264855", "Client 1", "", "130.00", "373,219.10", "Payment", AR],
  ["06/22/2023", "", "Client 3", "", "550.00", "373,089.10", "Payment", AR],
  ["06/21/2023", "", "Glo's Basic\nShoppe", "", "15,750.00", "372,539.10", "Payment", AR],
  ["06/20/2023", "2349021", "JADE\nSTORE", "", "356,789.10", "356,789.10", "Payment", AR],
];
const toCells = ([date, ref, payee, pay, dep, bal, type, acc]) => [date, ref, payee, "", "", pay, dep, "Cleared", bal, type, acc];
const blanks = (from) => columns.slice(from).map((_, i) => i + from);

const Group = ({ w, label, launcher, pad, justify, children }) => (
  <GroupBox $w={w}>
    <GroupInner>
      <GroupBody $pad={pad} $justify={justify}>{children}</GroupBody>
      <GroupFoot><FootLabel>{label}</FootLabel>{launcher && <Launcher aria-label={label + " settings"}><LauncherIcon /></Launcher>}</GroupFoot>
    </GroupInner>
  </GroupBox>
);
const Select = ({ w, label, value }) => (
  <SelectWrap $w={w}><Combo aria-label={label}><option>{value}</option></Combo><Triangle color="#666" /></SelectWrap>
);
const Arrow = ({ label }) => <SmallArrow aria-label={label}><Chevron /></SmallArrow>;

function TitleBar() {
  return (
    <Header>
      <HeaderArt width="520" height="64" viewBox="0 0 520 64" fill="#22663f">
        <path d="M42 6C60 -4 95 0 106 12 112 24 104 32 92 35 100 38 108 36 112 34 100 44 70 42 58 38 50 38 46 40 42 40 46 32 38 20 42 6Z" opacity=".6" />
        <path d="M138 0H208C218 14 214 30 204 36 210 40 216 38 216 40 214 46 214 48 212 48 196 44 170 50 150 50 140 48 134 44 132 38 140 42 146 40 152 36 136 28 128 12 138 0Z" />
        <path d="M246 0H384C392 10 384 26 366 34 380 38 392 34 398 28 396 44 376 50 350 46 320 40 270 34 236 44 240 36 246 32 250 28 240 20 238 8 246 0Z" />
        <path d="M462 28C470 24 490 26 494 38 506 42 514 38 520 38V48C500 52 480 46 466 50 470 44 456 38 462 28Z" />
        <path d="M420 0H462C464 14 450 20 436 16Z" opacity=".3" />
      </HeaderArt>
      <TitleRow>
        <QuickAccess>
          <QuickButton aria-label="Save"><SaveIcon /></QuickButton>
          <QuickButton $w={34} aria-label="Undo"><UndoIcon /></QuickButton>
          <QuickButton $w={5} aria-label="Undo list"><Chevron color="#fff" /></QuickButton>
          <QuickButton $w={34} $dim aria-label="Redo"><UndoIcon flip /></QuickButton>
          <QuickButton $w={5} $dim aria-label="Redo list"><Chevron color="#fff" /></QuickButton>
          <QuickButton $w={34} aria-label="Print preview"><PrintIcon /></QuickButton>
          <QuickButton $w={16} aria-label="Touch mode"><TouchIcon /></QuickButton>
          <QuickButton $w={22} aria-label="Touch list"><Chevron color="#fff" /></QuickButton>
          <QuickButton aria-label="Increase font size"><FontSizeIcon up color="#fff" mark="#fff" /></QuickButton>
          <QuickButton $w={34} aria-label="Decrease font size"><FontSizeIcon small color="#fff" mark="#fff" /></QuickButton>
          <QuickButton $w={22} aria-label="Customise toolbar"><svg width="6" height="8" viewBox="0 0 6 8"><path d="M0 1H6" stroke="#fff" /><path d="M0 3.500H6L3 7Z" fill="#fff" /></svg></QuickButton>
        </QuickAccess>
        <Title>{"Account History  [Compatibility Mode]  -  Excel"}</Title>
        <WindowTools>
          <User>fitzgerald benosa
            <svg width="24" height="24" viewBox="0 0 24 24"><path d="M0 0H24V24H0Z" fill="#b1afb1" /><ellipse cx="12" cy="8.500" rx="4.800" ry="5.500" fill="#fff" /><path d="M3 24C3 17 6 14.500 12 14.500S21 17 21 24Z" fill="#fff" /></svg>
          </User>
          <WindowButton aria-label="Ribbon display options"><WinIcon><path d="M.5 2.500H13.500V12H.5ZM.5 4.500H13.500M7 11V6.500M5 8.500 7 6.500 9 8.500" /></WinIcon></WindowButton>
          <WindowButton aria-label="Minimise"><WinIcon><path d="M2 7.500H12" /></WinIcon></WindowButton>
          <WindowButton aria-label="Restore"><WinIcon><path d="M2.500 4.500H9.500V12H2.500ZM4.500 4.500V2.500H11.500V10H9.500" /></WinIcon></WindowButton>
          <WindowButton aria-label="Close"><WinIcon><path d="M2 2 12 12M12 2 2 12" /></WinIcon></WindowButton>
        </WindowTools>
      </TitleRow>
      <TabRow>
        {tabs.map(([t, w]) => <Tab key={t} $w={w} $active={t === "Home"}>{t}</Tab>)}
        <TellMe><BulbIcon />Tell me what you want to do</TellMe>
        <CommentButton aria-label="Comments"><svg width="16" height="15" viewBox="0 0 16 15"><path d="M.5 .5H15.500V11H7L3.500 14V11H.5Z" fill="none" stroke="#fff" strokeWidth="1.200" /></svg></CommentButton>
      </TabRow>
    </Header>
  );
}

function RibbonBar() {
  return (
    <Ribbon>
      <Group w={165} label="Clipboard" launcher pad={10}>
        <BigButton $w={38} $disabled><BigIcon><PasteIcon /></BigIcon><Line>Paste</Line><Line><Chevron color="#b1b1b1" /></Line></BigButton>
        <CommandList $w={110} $pad={5}>
          <Command><IconSlot><CutIcon /></IconSlot>Cut</Command>
          <Command><IconSlot><CopyIcon /></IconSlot>Copy<ChevSlot $gap={8}><Chevron /></ChevSlot></Command>
          <Command><IconSlot><PainterIcon /></IconSlot>Format Painter</Command>
        </CommandList>
      </Group>
      <Group w={232} label="Font" launcher pad={7}>
        <Rows>
          <ToolRow>
            <Select w={123} label="Font" value="Arial" />
            <Select w={43} label="Font size" value="10" />
            <Tool aria-label="Increase font size"><FontSizeIcon up /></Tool>
            <Tool aria-label="Decrease font size"><FontSizeIcon small /></Tool>
          </ToolRow>
          <ToolRow>
            <Tool $bold>B</Tool><Tool $italic $bold $size={16}>I</Tool><Tool $bold $underline>U</Tool><Arrow label="Underline styles" />
            <Divider /><Tool aria-label="Borders"><BordersIcon /></Tool><Arrow label="Border styles" />
            <Divider /><Tool aria-label="Fill colour"><FillColorIcon /></Tool><Arrow label="Fill colours" />
            <Tool aria-label="Font colour"><FontColorIcon /></Tool><Arrow label="Font colours" />
          </ToolRow>
        </Rows>
      </Group>
      <Group w={280} label="Alignment" launcher pad={7}>
        <Rows>
          <ToolRow>
            <Tool aria-label="Top align"><LinesIcon rows={[[0, 1, 14], [2, 4, 10], [0, 7, 14]]} /></Tool>
            <Tool aria-label="Middle align"><LinesIcon rows={[[0, 4, 14], [2, 7, 10], [0, 10, 14]]} /></Tool>
            <Tool $pressed aria-label="Bottom align"><LinesIcon rows={[[0, 7, 14], [2, 10, 10], [0, 13, 14]]} /></Tool>
            <Divider $m="0 3px" /><Tool aria-label="Orientation"><OrientIcon /></Tool><Arrow label="Orientations" />
          </ToolRow>
          <ToolRow>
            <Tool aria-label="Align left"><LinesIcon rows={[[0, 1, 14], [0, 4, 10], [0, 7, 14], [0, 10, 10]]} /></Tool>
            <Tool aria-label="Centre"><LinesIcon rows={[[0, 1, 14], [2, 4, 10], [0, 7, 14], [2, 10, 10]]} /></Tool>
            <Tool aria-label="Align right"><LinesIcon rows={[[0, 1, 14], [4, 4, 10], [0, 7, 14], [4, 10, 10]]} /></Tool>
            <Divider $m="0 3px" /><Tool aria-label="Decrease indent"><IndentIcon out /></Tool><Tool aria-label="Increase indent"><IndentIcon /></Tool>
          </ToolRow>
        </Rows>
        <Divider $h={55} $m="7px 7px 0 3px" />
        <Rows>
          <Command><IconSlot><WrapIcon /></IconSlot>Wrap Text</Command>
          <Command><IconSlot><MergeIcon /></IconSlot>Merge &amp; Center<ChevSlot $gap={6}><Chevron /></ChevSlot></Command>
        </Rows>
      </Group>
      <Group w={156} label="Number" launcher pad={8}>
        <Rows>
          <ToolRow><Select w={140} label="Number format" value="General" /></ToolRow>
          <ToolRow>
            <Tool aria-label="Currency"><CurrencyIcon /></Tool><Arrow label="Currencies" /><Tool $size={16}>%</Tool>
            <Tool aria-label="Comma style"><CommaIcon /></Tool><Divider $m="0 3px 0 5px" />
            <Tool aria-label="Increase decimals"><DecimalIcon /></Tool><Tool aria-label="Decrease decimals"><DecimalIcon less /></Tool>
          </ToolRow>
        </Rows>
      </Group>
      <Group label="Styles" pad={8}>
        <BigButton $w={73}><BigIcon><CondIcon /></BigIcon><Line>Conditional</Line><Line>Formatting <Chevron /></Line></BigButton>
        <BigButton $w={60}><BigIcon><TableIcon /></BigIcon><Line>Format as</Line><Line>Table <Chevron /></Line></BigButton>
        <Gallery>
          <Swatches>{swatches.map(({ name, ...look }) => <Swatch key={name} {...look}>{name}</Swatch>)}</Swatches>
          <GalleryScroll>
            <GalleryButton $off aria-label="Previous styles"><Triangle dir="up" color="#b5b5b5" /></GalleryButton>
            <GalleryButton aria-label="Next styles"><Triangle color="#666" /></GalleryButton>
            <GalleryButton aria-label="All styles"><svg width="7" height="8" viewBox="0 0 7 8"><path d="M0 .5H7" stroke="#666" /><path d="M0 3.500H7L3.500 7.500Z" fill="#666" /></svg></GalleryButton>
          </GalleryScroll>
        </Gallery>
      </Group>
      <Group w={144} label="Cells" justify="center">
        <BigButton $w={42}><BigIcon><InsertIcon /></BigIcon><Line>Insert</Line><Line><Chevron /></Line></BigButton>
        <BigButton $w={43}><BigIcon><DeleteIcon /></BigIcon><Line>Delete</Line><Line><Chevron /></Line></BigButton>
        <BigButton $w={42}><BigIcon><FormatIcon /></BigIcon><Line>Format</Line><Line><Chevron /></Line></BigButton>
      </Group>
      <Group w={199} label="Editing" pad={10}>
        <CommandList $w={90}>
          <Command><IconSlot><SumIcon /></IconSlot>AutoSum<ChevSlot $gap={8}><Chevron /></ChevSlot></Command>
          <Command><IconSlot><FillIcon /></IconSlot>Fill<ChevSlot><Chevron /></ChevSlot></Command>
          <Command><IconSlot><ClearIcon /></IconSlot>Clear<ChevSlot><Chevron /></ChevSlot></Command>
        </CommandList>
        <BigButton $w={46}><BigIcon><SortIcon /></BigIcon><Line>Sort &amp;</Line><Line>Filter <Chevron /></Line></BigButton>
        <BigButton $w={44}><BigIcon><FindIcon /></BigIcon><Line>Find &amp;</Line><Line>Select <Chevron /></Line></BigButton>
      </Group>
      <Collapse aria-label="Collapse ribbon"><svg width="14" height="8" viewBox="0 0 14 8"><path d="M1 7 7 1 13 7" fill="none" stroke="#555" strokeWidth="1.300" /></svg></Collapse>
    </Ribbon>
  );
}

function Formula() {
  return (
    <FormulaBar>
      <NameBox><NameInput aria-label="Name box" defaultValue="O10" /><Triangle s={7} color="#777" /></NameBox>
      <Grip />
      <FormulaTools>
        <FormulaButton aria-label="Cancel"><svg width="12" height="11" viewBox="0 0 12 11"><path d="M1 1 11 10M11 1 1 10" stroke="#c4c4c4" strokeWidth="1.800" /></svg></FormulaButton>
        <FormulaButton aria-label="Enter"><svg width="13" height="11" viewBox="0 0 13 11"><path d="M1 6 4.500 9.500 12 1.500" fill="none" stroke="#c4c4c4" strokeWidth="2.200" /></svg></FormulaButton>
        <FormulaButton>fx</FormulaButton>
      </FormulaTools>
      <FormulaField><FormulaInput aria-label="Formula" /><Chevron big /></FormulaField>
    </FormulaBar>
  );
}

function Sheet() {
  return (
    <SheetArea>
      <GridView>
        <Grid>
          <colgroup><col width="29" />{columns.map((w, i) => <col key={i} width={w} />)}</colgroup>
          <thead>
            <tr>
              <Corner><svg width="11" height="11" viewBox="0 0 11 11"><path d="M11 0V11H0Z" fill="#b4b4b4" /></svg></Corner>
              {columns.map((_, i) => <ColHead key={i} $active={i === 14}>{letter(i)}</ColHead>)}
            </tr>
          </thead>
          <tbody>
            <Row $h={20}><RowHead>1</RowHead><TitleCell colSpan={13}>{"BDOEnding Balance:  $357,083.01"}</TitleCell>{blanks(13).map((i) => <Cell key={i} />)}</Row>
            <Row $h={52}><RowHead>2</RowHead>{headings.map((h) => <HeadCell key={h}>{h}</HeadCell>)}{blanks(13).map((i) => <Cell key={i} />)}</Row>
            {entries.map((e, r) => (
              <Row key={r} $h={r === 0 ? 35 : 52}>
                <RowHead $active={r === 7}>{r + 3}</RowHead>
                {toCells(e).map((v, i) => <Cell key={i}>{i === 1 && v && <ErrorMark />}{v}</Cell>)}
                {blanks(11).map((i) => <Cell key={i}>{r === 7 && i === 14 && <Selection />}</Cell>)}
              </Row>
            ))}
            {[15, 16, 17, 18, 19].map((n) => <Row key={n} $h={20}><RowHead>{n}</RowHead>{blanks(0).map((i) => <Cell key={i} />)}</Row>)}
          </tbody>
        </Grid>
      </GridView>
      <VScroll>
        <ScrollButton aria-label="Scroll up"><Triangle dir="up" color="#222" s={7} /></ScrollButton>
        <VTrack><VThumb /></VTrack>
        <ScrollButton aria-label="Scroll down"><Triangle color="#222" s={7} /></ScrollButton>
      </VScroll>
    </SheetArea>
  );
}

function Bottom() {
  return (
    <>
      <SheetTabs>
        <TabNav><Triangle dir="left" color="#b5b5b5" s={8} /><Triangle dir="right" color="#b5b5b5" s={8} /></TabNav>
        <SheetTab>Worksheet</SheetTab>
        <AddSheet aria-label="New sheet"><svg width="17" height="17" viewBox="0 0 17 17"><circle cx="8.500" cy="8.500" r="7.500" fill="none" stroke="#777" /><path d="M8.500 4.500V12.500M4.500 8.500H12.500" stroke="#777" strokeWidth="2" /></svg></AddSheet>
        <HScroll>
          <Grip $m={0} /><HGap />
          <ScrollButton aria-label="Scroll left"><Triangle dir="left" color="#222" s={7} /></ScrollButton>
          <HTrack><HThumb /></HTrack>
          <ScrollButton aria-label="Scroll right"><Triangle dir="right" color="#222" s={7} /></ScrollButton>
        </HScroll>
      </SheetTabs>
      <Status>
        <StatusText>Ready</StatusText>
        <Access>
          <svg width="16" height="14" viewBox="0 0 16 14" fill="none" stroke="#555"><path d="M5 2.500A5 5 0 1 0 8.500 12" strokeWidth="1.300" strokeDasharray="2.500 1" /><path d="M3 4.500 7 5.500 9 4.500M7 1V6" strokeWidth="1.200" /><path d="M10 7.500C10 4.500 15 4.500 15 7.500 15 9 12.500 9 12.500 11M12.500 12V14" strokeWidth="1.800" /></svg>
          Accessibility: Unavailable
        </Access>
        <Views>
          <ViewButton $active aria-label="Normal view"><svg width="14" height="14" viewBox="0 0 14 14"><path d="M.5 .5H13.500V13.500H.5ZM5 .5V13M9 .5V13M.5 5H13M.5 9H13" fill="none" stroke="#666" /></svg></ViewButton>
          <ViewButton aria-label="Page layout view"><svg width="14" height="14" viewBox="0 0 14 14"><path d="M.5 .5H13.500V13.500H.5ZM3.500 2.500H10.500V11.500H3.500ZM5 5H9M5 7H9M5 9H9" fill="none" stroke="#666" /></svg></ViewButton>
          <ViewButton aria-label="Page break view"><svg width="14" height="14" viewBox="0 0 14 14"><path d="M.5 .5H13.500V13.500H.5ZM.5 7.500H8.500V.5M4.500 .5V7.500" fill="none" stroke="#666" /></svg></ViewButton>
        </Views>
        <ZoomGroup>
          <button aria-label="Zoom out"><svg width="9" height="9" viewBox="0 0 9 9"><path d="M.5 4.500H8.500" stroke="#444" /></svg></button>
          <ZoomRange type="range" aria-label="Zoom" min="10" max="220" defaultValue="120" />
          <button aria-label="Zoom in"><svg width="9" height="9" viewBox="0 0 9 9"><path d="M.5 4.500H8.500M4.500 .5V8.500" stroke="#444" /></svg></button>
          <ZoomValue>115%</ZoomValue>
        </ZoomGroup>
      </Status>
    </>
  );
}

function TaskBar() {
  return (
    <Taskbar>
      <Start aria-label="Start"><svg width="16" height="16" viewBox="0 0 16 16"><path d="M0 2.200 6.500 1.300V7.600H0ZM7.300 1.200 16 0V7.600H7.300ZM0 8.400H6.500V14.700L0 13.800ZM7.300 8.400H16V16L7.300 14.800Z" fill="#fff" /></svg></Start>
      <Search>
        <svg width="17" height="17" viewBox="0 0 17 17" fill="none" stroke="#333" strokeWidth="1.300"><circle cx="10.500" cy="6" r="5.200" /><path d="M6.800 9.800 .6 16.200" /></svg>
        <SearchInput aria-label="Search" placeholder="Type here to search" />
        <SearchArtWrap><SearchArt /></SearchArtWrap>
      </Search>
      <Apps>
        <AppButton aria-label="Task view"><svg width="17" height="16" viewBox="0 0 17 16" fill="none" stroke="#fff"><path d="M1.500 0V3H11.500V0M1.500 5.500H11.500V10.500H1.500ZM1.500 16V13H11.500V16M15.500 0V3M15.500 8V16" strokeWidth="1.200" /><path d="M14 4.500H17V7.500H14Z" fill="#fff" stroke="none" /></svg></AppButton>
        <AppButton aria-label="Edge">
          <svg width="24" height="24" viewBox="0 0 24 24">
            <defs><linearGradient id="edgeTop" x1="0" x2="1"><stop offset="0" stopColor="#2aa6e0" /><stop offset=".6" stopColor="#38c7c0" /><stop offset="1" stopColor="#6fe25c" /></linearGradient></defs>
            <circle cx="12" cy="12" r="12" fill="#1272c8" />
            <path d="M0 11C1 4 6 0 12 0 19 0 24 5 24 10 24 14 21 16.500 17.500 16.500 15 16.500 14 15.500 14.500 14.500 16 11 13 7.500 9 7.500 5 7.500 1 9 0 11Z" fill="url(#edgeTop)" />
            <path d="M9.500 8C6 11 6 18 12 21.500 15 23 20 21 22.500 17 18 19.500 12 18 10.800 14 10.200 11.500 11 10 12.500 9.500 11.500 8.500 10.500 8 9.500 8Z" fill="#134a8a" />
            <path d="M14.500 14.500C13.500 16.500 17 18 22.800 16 20 20 15 21 12 18 10.500 16 10.500 11 13 10 15 11.500 15 13 14.500 14.500Z" fill="#26282b" />
          </svg>
        </AppButton>
        <AppButton $running aria-label="File Explorer"><svg width="22" height="20" viewBox="0 0 22 20"><path d="M0 0H9L10 2H22V18H0Z" fill="#e5a50e" /><path d="M0 4H22V18H0Z" fill="#ffd45c" /><path d="M4 10H18V20H14V14.500H8V20H4Z" fill="#3c96dd" /></svg></AppButton>
        <AppButton aria-label="Store"><svg width="24" height="24" viewBox="0 0 24 24"><path d="M7 5V1.500H17V5" fill="none" stroke="#19a3e8" strokeWidth="2" /><path d="M0 4H24V20C24 23 23 24 20 24H4C1 24 0 23 0 20Z" fill="#f1f1f1" /><path d="M7 9H11.500V13.500H7Z" fill="#f05022" /><path d="M12.500 9H17V13.500H12.500Z" fill="#7fba00" /><path d="M7 14.500H11.500V19H7Z" fill="#00a4ef" /><path d="M12.500 14.500H17V19H12.500Z" fill="#ffb900" /></svg></AppButton>
        <AppButton aria-label="Mail"><svg width="24" height="22" viewBox="0 0 24 22"><path d="M0 8 12 0 24 8V12H0Z" fill="#0c5ea8" /><path d="M2 7H22L12 15Z" fill="#f5f5f5" /><path d="M0 8 12 14.500 24 8V22H0Z" fill="#2aa5ea" /><path d="M0 22 24 8V22Z" fill="#47b9f5" /></svg></AppButton>
        <AppButton $running aria-label="Chrome"><svg width="24" height="24" viewBox="0 0 24 24"><circle cx="12" cy="12" r="12" fill="#fcc31e" /><path d="M12 12 1.600 6A12 12 0 0 1 22.400 6Z" fill="#e33b2e" /><path d="M1.600 6A12 12 0 0 0 12 24L17.200 15 12 12Z" fill="#2da94f" /><path d="M12 6.500H22.600A12 12 0 0 1 12 24L17 14.500Z" fill="#fcc31e" /><circle cx="12" cy="12" r="6" fill="#fff" /><circle cx="12" cy="12" r="4.600" fill="#3b7ded" /></svg></AppButton>
        <AppButton $running $active aria-label="Excel"><svg width="24" height="22" viewBox="0 0 24 22"><path d="M6 0H24V22H6Z" fill="#21a366" /><path d="M15 0H24V5.500H15Z" fill="#33c481" /><path d="M6 5.500H15V11H6Z" fill="#107c41" /><path d="M6 11H24V22H6Z" fill="#185c37" /><path d="M15 11H24V16.500H15Z" fill="#107c41" /><path d="M0 5H12V17H0Z" fill="#107c41" /><path d="M3.500 7.500 8.500 14.500M8.500 7.500 3.500 14.500" stroke="#fff" strokeWidth="1.800" /></svg></AppButton>
      </Apps>
      <Ticker>
        <svg width="23" height="22" viewBox="0 0 23 22" fill="#dd4012"><path d="M1 1C5 7 11 9 18 10" fill="none" stroke="#dd4012" strokeWidth="2.400" /><path d="M17 5 22.500 10.500 16 14.500Z" /><path d="M0 10 4 13V22H0ZM6 14 10 17V22H6ZM12 17.500H16V22H12ZM18 20H22V22H18Z" /></svg>
        Nikkei 225 <Loss>-0.91%</Loss>
      </Ticker>
      <Tray>
        <TrayButton aria-label="Hidden icons"><svg width="12" height="8" viewBox="0 0 12 8"><path d="M.8 7 6 1.500 11.200 7" fill="none" stroke="#fff" strokeWidth="1.300" /></svg></TrayButton>
        <TrayButton aria-label="Meet now"><svg width="12" height="16" viewBox="0 0 12 16" fill="none" stroke="#fff"><path d="M.5 4.500H8V11.500H.5ZM8 7 11 5.500V10.500L8 9M2 2C4 .5 6 .5 8 2M2 14C4 15.500 6 15.500 8 14" strokeWidth="1.200" /></svg></TrayButton>
        <TrayButton aria-label="Sync"><svg width="17" height="17" viewBox="0 0 17 17" fill="none" stroke="#fff"><path d="M.5 4 1 13.500H8M.5 3.500 15.500 1V9M5 6.500C7 4 10 5 10.500 7M10.500 4V7H8M10 9C8 12 5.500 10.500 5 9.500M5 12V9.500H7" /><circle cx="12.500" cy="13" r="3.800" fill="#2f7bd0" stroke="none" /></svg></TrayButton>
        <TrayButton aria-label="Network"><svg width="14" height="14" viewBox="0 0 14 14" fill="none" stroke="#fff"><path d="M1 12C1 5 5 1.500 12.500 1.500M4 13C4 8 7 5 12.500 5M7 13C7 10 9 8 12.500 8" strokeWidth="1.200" /><circle cx="11.500" cy="12" r="1.500" fill="#fff" stroke="none" /></svg></TrayButton>
        <TrayButton aria-label="Volume"><svg width="17" height="14" viewBox="0 0 17 14" fill="none" stroke="#fff"><path d="M.5 5H3L6.500 1.500V12.500L3 9H.5ZM9 5C10 6 10 8 9 9M11.500 3C13.500 5.500 13.500 8.500 11.500 11M14 1.500C17 5 17 9 14 12.500" strokeWidth="1.100" /></svg></TrayButton>
        <Language>ENG</Language>
        <Clock>11:44 am<br />17/08/2023</Clock>
        <Notify aria-label="Notifications, 1 new"><svg width="24" height="26" viewBox="0 0 24 26"><path d="M0 1H16V14H8L4.500 17V14H0Z" fill="#fff" /><path d="M2.500 4.500H13.500M2.500 7.500H13.500M2.500 10.500H11" stroke="#333" /><circle cx="15" cy="16" r="8" fill="#4a4a4e" stroke="#8d8d92" /><text x="15" y="20.500" textAnchor="middle" fill="#fff" fontSize="12" fontFamily="Open Sans">1</text></svg></Notify>
        <DesktopEdge aria-label="Show desktop" />
      </Tray>
    </Taskbar>
  );
}

export default function App() {
  return (
    <Window>
      <GlobalStyle />
      <TitleBar />
      <RibbonBar />
      <Formula />
      <Sheet />
      <Bottom />
      <TaskBar />
    </Window>
  );
}
